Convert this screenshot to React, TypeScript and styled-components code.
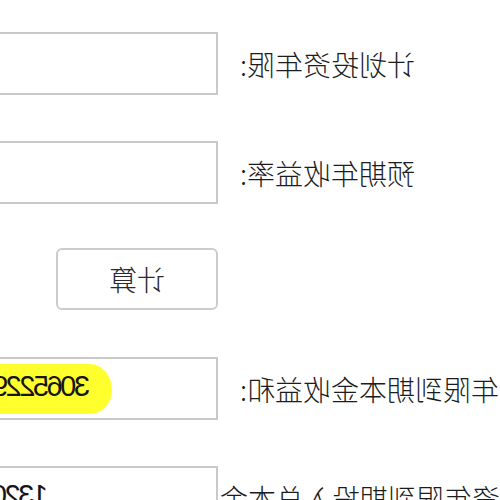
import React from "react";
import styled, { createGlobalStyle } from "styled-components";

const Global = createGlobalStyle`
  html, body { margin: 0; padding: 0; background: #ffffff; }
  body { overflow: hidden; }
`;

const Page = styled.div`
  width: 500px;
  height: 500px;
  overflow: hidden;
  background: #ffffff;
  transform: scaleX(-1);
  font-family: "Noto Sans CJK SC", "Noto Sans", sans-serif;
`;

const Form = styled.div`
  display: flex;
  flex-direction: column;
  gap: 46px;
  padding-top: 32px;
`;

const Row = styled.div<{ $h?: number; $mt?: number; $mb?: number }>`
  display: grid;
  grid-template-columns: 260px 420px;
  column-gap: 22px;
  height: ${(p) => p.$h ?? 63}px;
  margin-top: ${(p) => p.$mt ?? 0}px;
  margin-bottom: ${(p) => p.$mb ?? 0}px;
`;

const Label = styled.div<{ $pull?: number }>`
  display: flex;
  align-items: center;
  justify-content: flex-end;
  white-space: nowrap;
  font-size: 28px;
  font-weight: 300;
  color: #1c1c1c;
  margin-right: ${(p) => -(p.$pull ?? 0)}px;
`;

const Field = styled.div<{ $indent?: number }>`
  position: relative;
  box-sizing: border-box;
  height: 100%;
  border: 2px solid #c9c9c9;
  background: #fff;
  display: flex;
  align-items: center;
  padding-left: ${(p) => p.$indent ?? 10}px;
`;

const Value = styled.span`
  position: relative;
  font-family: "Liberation Sans", Arial, sans-serif;
  font-size: 29px;
  letter-spacing: -2.5px;
  color: #161616;
  white-space: nowrap;
  margin-top: -4px;
`;

const Marker = styled.div`
  position: absolute;
  left: 104px;
  top: 5px;
  width: 140px;
  height: 50px;
  background: #ffff2e;
  border-radius: 22px 12px 12px 22px / 26px 12px 12px 24px;
`;

const Button = styled.button`
  box-sizing: border-box;
  width: 162px;
  height: 100%;
  border: 2px solid #cccccc;
  border-radius: 6px;
  background: #fff;
  font-family: "Noto Sans CJK SC", "Noto Sans", sans-serif;
  font-size: 28px;
  font-weight: 300;
  color: #2a2a2a;
  padding: 0;
  display: flex;
  align-items: center;
  justify-content: center;
`;

export default function App() {
  return (
    <>
      <Global />
      <Page>
        <Form>
          <Row>
            <Label>计划投资年限:</Label>
            <Field />
          </Row>
          <Row>
            <Label>预期年收益率:</Label>
            <Field />
          </Row>
          <Row $h={62} $mt={-2} $mb={1}>
            <div />
            <Button>计算</Button>
          </Row>
          <Row>
            <Label>计划投资年限到期本金收益和:</Label>
            <Field $indent={126}>
              <Marker />
              <Value>3065229.19</Value>
            </Field>
          </Row>
          <Row>
            <Label $pull={20}>计划投资年限到期投入总本金</Label>
            <Field $indent={168}>
              <Value>1320000</Value>
            </Field>
          </Row>
        </Form>
      </Page>
    </>
  );
}
